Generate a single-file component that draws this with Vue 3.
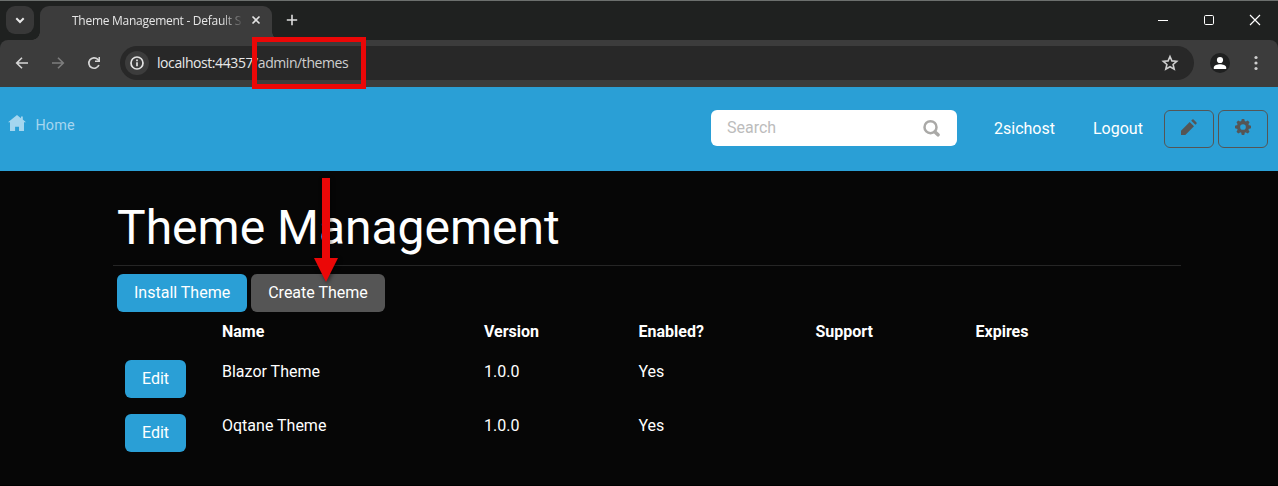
<script setup>
const columns = ['', 'Name', 'Version', 'Enabled?', 'Support', 'Expires']
const themes = [
  { name: 'Blazor Theme', version: '1.0.0', enabled: 'Yes' },
  { name: 'Oqtane Theme', version: '1.0.0', enabled: 'Yes' },
]
</script>

<template>
  <div class="window">
    <div class="tabstrip">
      <button class="tab-search">
        <svg width="28" height="28" viewBox="0 0 28 28"><path d="M10.300 12.300 14 16l3.700-3.700" fill="none" stroke="#e8e8e8" stroke-width="2" /></svg>
      </button>
      <div class="tab">
        <span class="tab-title">Theme Management - Default S</span>
        <svg class="tab-close" width="10" height="10" viewBox="0 0 10 10"><path d="M1.500 1.500 8.500 8.500M8.500 1.500 1.500 8.500" stroke="#e3e3e3" stroke-width="1.600" /></svg>
      </div>
      <svg class="new-tab" width="12" height="12" viewBox="0 0 12 12"><path d="M6 .8V11.200M.8 6H11.200" stroke="#dedede" stroke-width="1.600" /></svg>
      <div class="controls">
        <svg width="12" height="12" viewBox="0 0 12 12"><path d="M1 6.500H11" stroke="#fff" /></svg>
        <svg width="12" height="12" viewBox="0 0 12 12"><rect x="1.500" y="1.500" width="9" height="9" rx="1.200" fill="none" stroke="#fff" /></svg>
        <svg width="12" height="12" viewBox="0 0 12 12"><path d="M1 1 11 11M11 1 1 11" stroke="#fff" stroke-width="1.200" /></svg>
      </div>
    </div>

    <div class="toolbar">
      <div class="nav">
        <svg width="14" height="14" viewBox="0 0 14 14"><path d="M13 7H2M7 1.700 1.700 7 7 12.300" fill="none" stroke="#d6d6d6" stroke-width="1.600" /></svg>
        <svg width="14" height="14" viewBox="0 0 14 14"><path d="M1 7H12M7 1.700 12.300 7 7 12.300" fill="none" stroke="#7d7d7d" stroke-width="1.600" /></svg>
        <svg width="14" height="14" viewBox="0 0 14 14"><path d="M11.900 9A5.200 5.200 0 1 1 10.800 3.400L12 4.600" fill="none" stroke="#d6d6d6" stroke-width="1.700" /><path d="M13 1V6H8V4.500H11.500V1Z" fill="#d6d6d6" /></svg>
      </div>
      <div class="address">
        <span class="site-info">
          <svg width="14" height="14" viewBox="0 0 14 14"><circle cx="7" cy="7" r="6" fill="none" stroke="#e3e3e3" stroke-width="1.700" /><path d="M7 6.200V10.300M7 3.600V5.200" stroke="#e3e3e3" stroke-width="1.700" /></svg>
        </span>
        <span class="url">localhost:44357<span class="path">/admin/themes</span></span>
        <svg class="star" width="18" height="18" viewBox="0 0 18 18"><path d="M9 2.500 10.900 6.900 15.700 7.300 12.100 10.500 13.200 15.200 9 12.700 4.800 15.200 5.900 10.500 2.300 7.300 7.100 6.900Z" fill="none" stroke="#cfcfcf" stroke-width="1.600" /></svg>
      </div>
      <svg class="profile" width="20" height="20" viewBox="0 0 20 20"><circle cx="10" cy="10" r="10" fill="#1f2020" /><circle cx="10" cy="7" r="3.100" fill="#fff" /><path d="M3.800 16V14.500C3.800 12 7.500 11.200 10 11.200S16.200 12 16.200 14.500V16Z" fill="#fff" /></svg>
      <svg class="kebab" width="4" height="16" viewBox="0 0 4 16"><g fill="#cfcfcf"><circle cx="2" cy="2.500" r="1.600" /><circle cx="2" cy="8" r="1.600" /><circle cx="2" cy="13.500" r="1.600" /></g></svg>
      <div class="url-highlight"></div>
    </div>

    <header class="site-header">
      <a class="home">
        <svg width="18" height="17" viewBox="0 0 18 17"><path d="M9 0 0 7.200H2V16H7.100V11.700H11V16H16V7.200H18L14.800 4.600V1.500H13V3.200Z" fill="#a5d6ef" /></svg>
        <span>Home</span>
      </a>
      <div class="search">
        <span>Search</span>
        <svg width="18" height="18" viewBox="0 0 18 18"><circle cx="7.500" cy="8.200" r="6" fill="none" stroke="#aaa9a7" stroke-width="2.500" /><path d="M12 13 15 15.800" stroke="#aaa9a7" stroke-width="3.600" stroke-linecap="round" /></svg>
      </div>
      <a class="user">2sichost</a>
      <a class="logout">Logout</a>
      <button class="outline">
        <svg width="16" height="16" viewBox="0 0 16 16"><path d="M0 16V11.700L8.700 3 13 7.300 4.300 16ZM10.200 1.700 11.300.6Q12 0 12.600.6L15.500 3.500Q16 4.100 15.500 4.700L14.400 5.800Z" fill="#555" /></svg>
      </button>
      <button class="outline">
        <svg width="16" height="16" viewBox="-8 -8 16 16">
          <circle r="4.500" fill="none" stroke="#555" stroke-width="3.300" />
          <g fill="#555"><path v-for="n in 8" :key="n" d="M-1.900-5.500-1.200-8H1.200L1.900-5.500Z" :transform="`rotate(${n * 45})`" /></g>
        </svg>
      </button>
    </header>

    <main>
      <h1>Theme Management</h1>
      <hr />
      <div class="actions">
        <button class="btn primary">Install Theme</button>
        <button class="btn secondary">Create Theme</button>
      </div>
      <div class="table">
        <div class="row head"><span v-for="c in columns" :key="c">{{ c }}</span></div>
        <div v-for="t in themes" :key="t.name" class="row">
          <span><button class="btn primary">Edit</button></span>
          <span>{{ t.name }}</span>
          <span>{{ t.version }}</span>
          <span>{{ t.enabled }}</span>
        </div>
      </div>
      <svg class="arrow" width="24" height="104" viewBox="0 0 24 104"><path d="M8 0H16V80H24L12 104 0 80H8Z" fill="#eb0707" /></svg>
    </main>
  </div>
</template>

<style>
body { margin: 0; background: #060606; overflow: hidden; }
</style>

<style scoped>
* { box-sizing: border-box; }
svg { display: block; flex: none; }
button { border: 0; padding: 0; font: inherit; }
.window { height: 486px; display: flex; flex-direction: column; background: linear-gradient(#1f2120 60px, #060606 60px); color: #fff; font-family: Roboto, sans-serif; font-size: 16px; line-height: 24px; }
.tabstrip { height: 40px; flex: none; display: flex; background: #1f2120; border-top: 1px solid #6c706e; }
.tab-search { width: 28px; height: 28px; margin: 5px 0 0 6px; border-radius: 9px; background: #383838; }
.tab { position: relative; width: 232px; height: 34px; margin: 5px 0 0 6px; padding-left: 32px; display: flex; align-items: flex-start; background: #3c3c3c; border-radius: 9px 9px 0 0; }
.tab::before, .tab::after { content: ''; position: absolute; bottom: 0; width: 8px; height: 8px; }
.tab::before { left: -8px; background: radial-gradient(circle at 0 0, transparent 7.500px, #3c3c3c 8px); }
.tab::after { right: -8px; background: radial-gradient(circle at 100% 0, transparent 7.500px, #3c3c3c 8px); }
.tab-title { width: 169px; padding-top: 6px; white-space: nowrap; font: 12px/18px "Open Sans", sans-serif; letter-spacing: -.27px; color: #e6e6e6; -webkit-mask-image: linear-gradient(90deg, #000 88%, rgba(0,0,0,.15)); mask-image: linear-gradient(90deg, #000 88%, rgba(0,0,0,.15)); }
.tab-close { margin: 9px 0 0 10px; }
.new-tab { margin: 13px 0 0 14px; }
.controls { margin: 13px 17px 0 auto; display: flex; gap: 34px; }
.toolbar { position: relative; height: 47px; flex: none; display: flex; align-items: center; padding: 0 20px 1px 15px; background: #3c3c3c; border-radius: 8px 8px 0 0; }
.nav { display: flex; gap: 22px; }
.address { width: 1074px; height: 34px; margin-left: 19px; padding: 0 15px 0 5px; display: flex; align-items: center; border-radius: 17px; background: #282828; }
.site-info { width: 24px; height: 24px; display: grid; place-items: center; border-radius: 50%; background: #3c3c3c; }
.url { margin-left: 8px; font: 14px/20px "Open Sans", sans-serif; letter-spacing: -.42px; color: #e8e8e8; }
.path { color: #cfcfcf; }
.star { margin-left: auto; }
.profile { margin-left: 16px; }
.kebab { margin-left: 24px; }
.url-highlight { position: absolute; left: 252px; top: -3px; width: 114px; height: 52px; border: 5px solid #eb0707; z-index: 2; }
.site-header { height: 84px; flex: none; display: flex; align-items: flex-start; padding: 23px 10px 0 8px; background: #2a9fd6; }
.home { display: flex; gap: 10px; padding-top: 5px; font-size: 14.400px; line-height: 20px; letter-spacing: .1px; color: #a5d6ef; }
.home span { margin: 1px 0 0 -.5px; }
.search { width: 246px; height: 36px; margin-left: auto; padding: 0 16px; display: flex; align-items: center; justify-content: space-between; background: #fff; border-radius: 6px; color: #bcbcbc; }
.user { width: 61px; margin: 7px 0 0 37px; }
.logout { width: 50px; margin: 7px 21px 0 38px; }
.outline { width: 50px; height: 38px; padding: 0 0 4px 16px; border: 1px solid #555; border-radius: 6px; background: transparent; }
.outline + .outline { margin-left: 4px; }
main { position: relative; flex: 1; padding: 28px 97px 0 113px; border-bottom: 1px solid #000; }
h1 { margin: 0; padding-left: 4px; font-size: 48px; line-height: 58px; font-weight: 400; }
hr { margin: 8px 0 8px; border: 0; height: 1px; background: #252525; }
.actions { display: flex; gap: 4px; margin-left: 4px; }
.btn { height: 38px; padding: 0 17px; border-radius: 6px; color: #fff; white-space: nowrap; }
.primary { background: #2a9fd6; }
.secondary { background: #555; }
.table { margin-left: 4px; }
.row { display: grid; grid-template-columns: 97px 262px 154.500px 177px 160px 1fr; height: 54px; }
.row.head { height: 40px; font-weight: 700; }
.row > span { padding: 8px; padding-bottom: 0; }
.arrow { position: absolute; left: 314px; top: 7px; overflow: visible; filter: drop-shadow(1px 2px 2px rgba(0, 0, 0, .5)); }
</style>
